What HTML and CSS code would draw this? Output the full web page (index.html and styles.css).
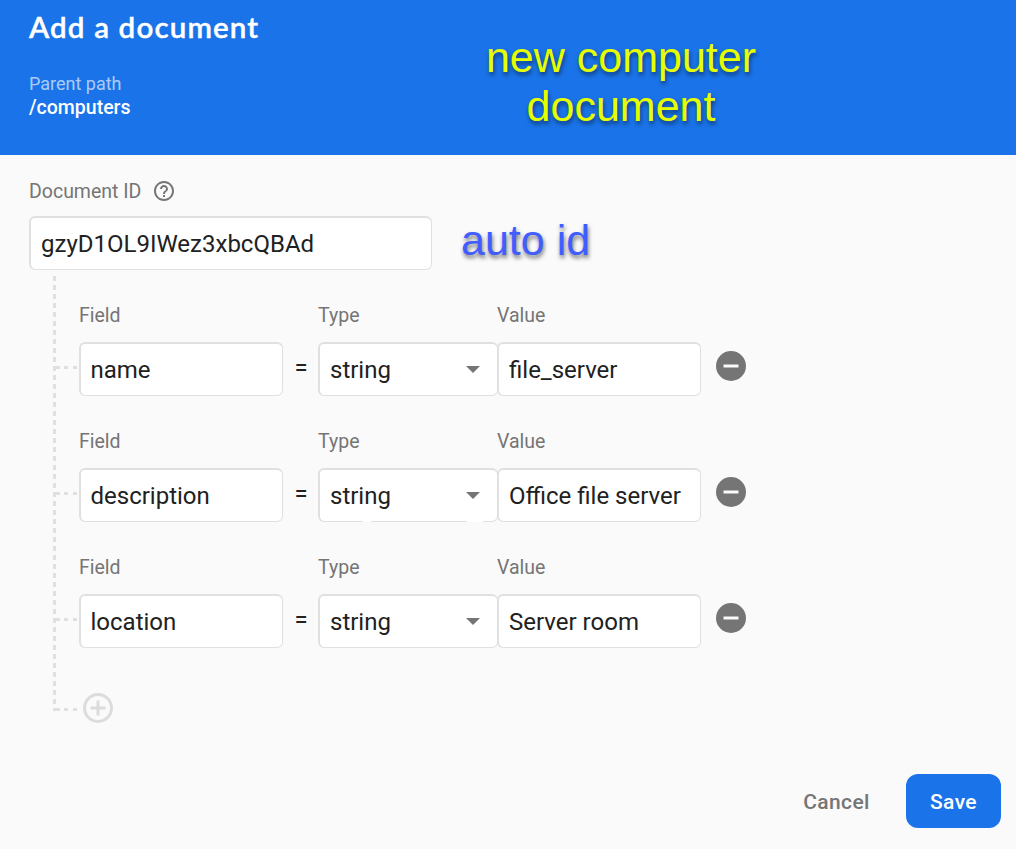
FILE: index.html
```html
<!DOCTYPE html>
<html lang="en">
<head>
<meta charset="utf-8">
<title>Add a document</title>
<link rel="stylesheet" href="styles.css">
</head>
<body>
<svg class="sprite" aria-hidden="true">
  <symbol id="minus" viewBox="0 0 30 30"><circle cx="15" cy="15" r="15" fill="#757575"/><path d="M7.5 15h15" stroke="#fafafa" stroke-width="3"/></symbol>
</svg>
<main class="dialog">
  <header class="header">
    <div class="heading">
      <h1 class="title">Add a document</h1>
      <div class="path-label">Parent path</div>
      <div class="path">/computers</div>
    </div>
    <div class="note note-doc">new computer<br>document</div>
  </header>
  <section class="content">
    <div class="label id-label"><span class="id-text">Document ID</span>
      <svg class="help" viewBox="0 0 24 24" width="24" height="24"><path fill="#757575" d="M11 18h2v-2h-2v2zm1-16C6.48 2 2 6.480 2 12s4.480 10 10 10 10-4.480 10-10S17.520 2 12 2zm0 18c-4.410 0-8-3.590-8-8s3.590-8 8-8 8 3.590 8 8-3.590 8-8 8zm0-14c-2.210 0-4 1.790-4 4h2c0-1.100.9-2 2-2s2 .9 2 2c0 2-3 1.750-3 5h2c0-2.250 3-2.500 3-5 0-2.210-1.790-4-4-4z"/></svg>
    </div>
    <div class="id-row">
      <div class="box id-box">gzyD1OL9IWez3xbcQBAd</div>
      <div class="note note-id">auto id</div>
    </div>
    <div class="tree">
      <div class="row">
        <i class="branch"></i>
        <div class="col"><span class="label">Field</span><div class="box field">name</div></div>
        <span class="equals">=</span>
        <div class="col"><span class="label">Type</span><div class="box type">string<i class="arrow"></i></div></div>
        <div class="col col-value"><span class="label">Value</span><div class="box value">file_server</div></div>
        <svg class="remove" width="30" height="30"><use href="#minus"/></svg>
      </div>
      <div class="row">
        <i class="branch"></i>
        <div class="col"><span class="label">Field</span><div class="box field">description</div></div>
        <span class="equals">=</span>
        <div class="col"><span class="label">Type</span><div class="box type">string<i class="arrow"></i><i class="gap gap-small"></i><i class="gap gap-large"></i></div></div>
        <div class="col col-value"><span class="label">Value</span><div class="box value">Office file server</div></div>
        <svg class="remove" width="30" height="30"><use href="#minus"/></svg>
      </div>
      <div class="row">
        <i class="branch"></i>
        <div class="col"><span class="label">Field</span><div class="box field">location</div></div>
        <span class="equals">=</span>
        <div class="col"><span class="label">Type</span><div class="box type">string<i class="arrow"></i></div></div>
        <div class="col col-value"><span class="label">Value</span><div class="box value">Server room</div></div>
        <svg class="remove" width="30" height="30"><use href="#minus"/></svg>
      </div>
      <div class="add-row">
        <i class="branch branch-last"></i>
        <svg class="add" width="30" height="30" viewBox="0 0 30 30" fill="none" stroke="#dcdcdc" stroke-width="3"><circle cx="15" cy="15" r="13.500"/><path d="M15 7.500v15M7.500 15h15"/></svg>
      </div>
    </div>
  </section>
  <footer class="actions">
    <button class="btn cancel">Cancel</button>
    <button class="btn save">Save</button>
  </footer>
</main>
</body>
</html>
```
FILE: styles.css
```css
* { box-sizing: border-box; }
body { margin: 0; background: #fafafa; color: #212121; font-family: Roboto, sans-serif; }
.sprite { display: none; }
.dialog { width: 1016px; height: 849px; display: flex; flex-direction: column; overflow: hidden; }

.header { height: 155px; flex: none; display: flex; background: #1a73e8; color: #fff; padding-left: 29px; }
.heading { width: 442px; padding-top: 9px; }
.title { margin: 0 0 27px; font: 600 29.5px/36px Lato, sans-serif; letter-spacing: 1.15px; -webkit-text-stroke: 0.4px #fff; }
.path-label { font-size: 18px; line-height: 24px; color: rgba(255,255,255,.65); }
.path { font-size: 19.5px; line-height: 23px; font-weight: 500; }

.note { font-family: "Liberation Sans", Arial, sans-serif; white-space: nowrap; }
.note-doc { width: 300px; padding-top: 33px; font-size: 43px; line-height: 49px; text-align: center; color: #e6ff00; text-shadow: 1px 3px 4px rgba(0,0,0,.5); }
.note-id { font-size: 43px; line-height: 49px; color: #415dff; text-shadow: 1px 3px 4px rgba(0,0,0,.55); }

.content { padding-left: 29px; flex: 1; }
.label { display: block; font-size: 19.5px; line-height: 24px; color: #757575; }
.id-label { display: flex; gap: 11px; padding-top: 24px; height: 61px; }
.id-text { padding-top: 1px; }
.id-row { display: flex; gap: 29px; height: 54px; }
.box { height: 54px; padding-left: 10px; background: #fff; border: solid #e0e0e0; border-width: 2px 1px 1px 2px; border-radius: 6px; font-size: 24px; line-height: 52px; white-space: nowrap; }
.id-box { width: 403px; }

.tree { margin: 6px 0 0 24px; height: 435px; padding-top: 27px; background: repeating-linear-gradient(#e0e0e0 0 5px, transparent 5px 9px) 0 0 / 3px 432px no-repeat; }
.row { display: flex; height: 126px; }
.branch { width: 24px; height: 3px; margin: 63px 2px 0 0; flex: none; background: linear-gradient(90deg, #e0e0e0 7px, transparent 7px 11px, #e0e0e0 11px 15px, transparent 15px 20px, #e0e0e0 20px); }
.col { padding-top: 1px; }
.col-value { margin-left: -1px; }
.col .box { margin-top: 14px; }
.box.field { width: 204px; padding-left: 9.5px; }
.equals { width: 35px; padding: 53px 0 0 1px; text-align: center; font-size: 24px; line-height: 24px; }
.type { position: relative; width: 180px; display: flex; justify-content: space-between; padding-right: 17px; }
.value { width: 204px; }
.arrow { margin-top: 22px; width: 14px; height: 7px; background: #757575; clip-path: polygon(0 0, 100% 0, 50% 100%); }
.gap { position: absolute; bottom: -1px; height: 1px; background: #fff; }
.gap-small { left: 43px; width: 8px; }
.gap-large { left: 147px; width: 16px; }
.remove { margin: 48px 0 0 15px; }
.add-row { display: flex; }
.branch-last { margin: 27px 6px 0 0; }
.add { margin-top: 12px; }

.actions { flex: none; height: 75px; display: flex; justify-content: flex-end; gap: 12px; padding-right: 15px; }
.btn { border: 0; height: 54px; border-radius: 12px; padding: 2px 0 0; font: 500 21px/52px Roboto, sans-serif; letter-spacing: .4px; }
.cancel { width: 115px; background: none; color: #757575; }
.save { width: 95px; background: #1a73e8; color: #fff; }
```
